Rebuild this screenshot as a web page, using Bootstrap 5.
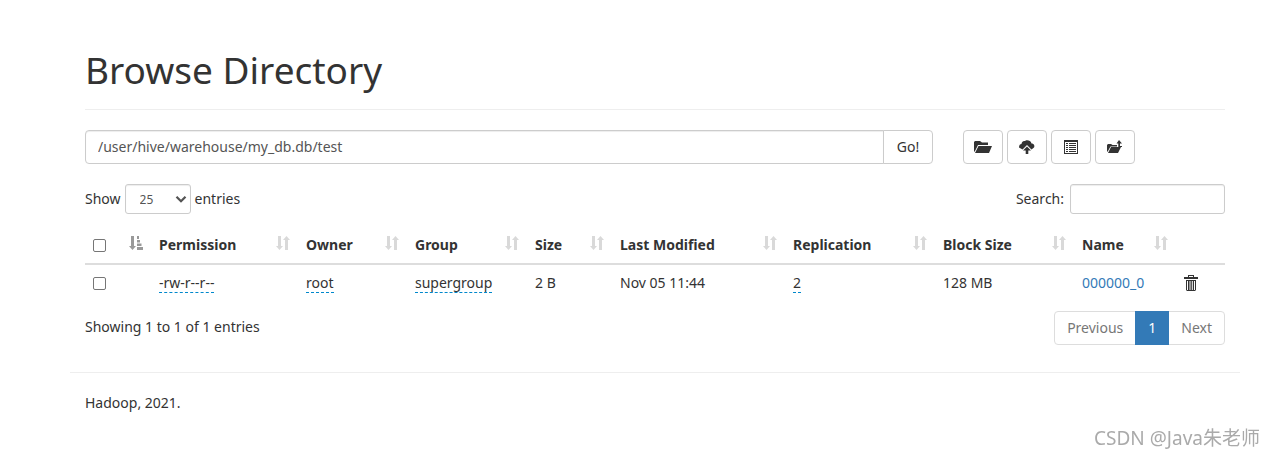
<!DOCTYPE html>
<html lang="en">
<head>
<meta charset="utf-8">
<meta name="viewport" content="width=device-width, initial-scale=1">
<title>Browsing HDFS</title>
<link href="https://cdn.jsdelivr.net/npm/bootstrap@5.3.0/dist/css/bootstrap.min.css" rel="stylesheet">
<style>
  body { font-family: "Noto Sans", "Noto Sans CJK SC", sans-serif; font-size: 14px; line-height: 22px; color: #333; }
  .page { max-width: 1170px; margin: 0 34px 0 70px; }
  .page-inner { padding: 0 15px; }
  .page-title { font-size: 37px; line-height: 44px; font-weight: 400; border-bottom: 1px solid #eee; padding: 48px 0 17px; margin-bottom: 20px; }
  .path-group { width: 848px; max-width: 100%; height: 34px; }
  .form-control, .form-select { border-color: #ccc; color: #555; font-size: 14px; line-height: 20px; box-shadow: inset 0 1px 1px rgba(0,0,0,.075); }
  .path-group .form-control { padding: 6px 12px; border-radius: 4px; }
  .btn-plain { border: 1px solid #ccc; color: #333; background: #fff; font-size: 14px; line-height: 20px; padding: 5px 12px; border-radius: 4px; }
  .btn-plain:hover { background: #e6e6e6; border-color: #adadad; }
  .go { width: 50px; }
  .tools { margin-left: 30px; }
  .tool { width: 40px; height: 34px; }
  .controls { margin-top: 20px; }
  .search { gap: 6px; }
  .len-select { width: 66px; height: 30px; font-size: 12px; padding: 5px 14px; border-radius: 3px; background-size: 12px 12px; background-position: right 3px center; background-image: url("data:image/svg+xml,%3csvg xmlns='http://www.w3.org/2000/svg' viewBox='0 0 16 16'%3e%3cpath fill='none' stroke='%23555' stroke-width='3' d='m2 5 6 6 6-6'/%3e%3c/svg%3e"); }
  .filter-box { width: 155px; height: 30px; padding: 5px 10px; border-radius: 3px; }
  .files { table-layout: fixed; margin: 11px 0 9px; color: #333; }
  .files th, .files td { padding: 7px 8px 8px; border: 0; white-space: nowrap; line-height: 22px; vertical-align: middle; }
  .files thead th { border-bottom: 2px solid #ddd; padding: 9px 8px 7px; }
  .files .form-check-input { width: 13px; height: 13px; margin: 0; border: 1px solid #767676; border-radius: 2px; display: block; }
  .sort { width: 14px; height: 16px; color: #d9d9d9; margin-top: 1px; }
  .sort.on { color: #999; margin-bottom: 5px; }
  .files .editable { color: #333; text-decoration: none; border-bottom: 1px dashed #0088cc; }
  .file-link { color: #337ab7; text-decoration: none; }
  .bare { border: 0; background: none; padding: 0; color: #333; display: flex; }
  .info { padding-top: 5px; }
  .pagination { --bs-pagination-font-size: 14px; --bs-pagination-padding-x: 12px; --bs-pagination-padding-y: 6px; --bs-pagination-color: #777; --bs-pagination-disabled-color: #777; --bs-pagination-border-color: #ddd; --bs-pagination-disabled-border-color: #ddd; --bs-pagination-disabled-bg: #fff; --bs-pagination-active-bg: #337ab7; --bs-pagination-active-border-color: #337ab7; --bs-pagination-border-radius: 4px; line-height: 20px; }
  .footer { border-top: 1px solid #eee; margin-top: 27px; padding: 19px 15px 0; }
  .watermark { position: fixed; right: 14px; bottom: 8px; font-size: 19px; line-height: 24px; color: #aaa; }
  svg { fill: currentColor; }
</style>
</head>
<body>
<svg class="d-none" xmlns="http://www.w3.org/2000/svg">
  <symbol id="i-sort" viewBox="0 0 14 16"><path d="M2 1h3v10h2L3.500 15 0 11h2zM9 15h3V5h2L10.500 1 7 5h2z"/></symbol>
  <symbol id="i-sorted" viewBox="0 0 14 16"><path d="M2 1h3v10h2L3.500 15 0 11h2zM8 1h2v3H8zM8 5h3v2.500H8zM8 8.500h4.500V11H8zM8 12h6v3H8z"/></symbol>
  <symbol id="i-folder" viewBox="0 0 18 14"><path d="M0 12V2l1-1h5l2 1.500h6V5H4L1 11zM4.500 6H18l-3 7H1z"/></symbol>
  <symbol id="i-upload" viewBox="0 0 16 16"><path d="M3.500 10.500 0 8.500C0 6 1.200 5 2.500 5 2.500 3 4 1.500 6 2c1-1.500 6-1 6.500 2.500C15 4.500 16 7 15 8.500l-2.500 2L8 6zM8 7.500l4 4H9.300V15H6.700v-3.500H4z"/></symbol>
  <symbol id="i-list" viewBox="0 0 14 14"><path fill-rule="evenodd" d="M0 0h14v14H0zM1 2v11h12V2z"/><path d="M2 3h2v1H2zm3 0h7v1H5zM2 5h2v1H2zm3 0h7v1H5zM2 7h2v1H2zm3 0h7v1H5zM2 9h2v1H2zm3 0h7v1H5zM2 11h2v1H2zm3 0h7v1H5z"/></symbol>
  <symbol id="i-parent" viewBox="0 0 16 14"><path d="M0 12V5l1-1h3l1.500 1H10v1.500H3.500L1 11zM4 7h10l-3 6H1zM11.300 7V3.500H9.500L12 0l3 3.500h-2V6H15v1z"/></symbol>
  <symbol id="i-trash" viewBox="0 0 14 16"><path fill-rule="evenodd" d="M4 2V0h6v2h4v2H0V2zM5 1v1h4V1zM2 5h10v10l-1 1H3l-1-1zM3 6v9h1V6zM5.500 6v9h1V6zM7.800 6v9h1V6zM10 6v9h1V6z"/></symbol>
</svg>

<main class="page">
  <div class="page-inner">
    <h1 class="page-title">Browse Directory</h1>
    <div class="d-flex flex-wrap">
      <form class="input-group path-group">
        <input class="form-control" type="text" value="/user/hive/warehouse/my_db.db/test" aria-label="Directory">
        <button class="btn btn-plain go" type="button">Go!</button>
      </form>
      <div class="d-flex gap-1 tools">
        <button class="btn-plain tool d-flex align-items-center justify-content-center p-0" type="button" aria-label="Create directory"><svg width="18" height="14"><use href="#i-folder"/></svg></button>
        <button class="btn-plain tool d-flex align-items-center justify-content-center p-0" type="button" aria-label="Upload files"><svg width="16" height="16"><use href="#i-upload"/></svg></button>
        <button class="btn-plain tool d-flex align-items-center justify-content-center p-0" type="button" aria-label="Cut and paste"><svg width="14" height="14"><use href="#i-list"/></svg></button>
        <button class="btn-plain tool d-flex align-items-center justify-content-center p-0" type="button" aria-label="Parent directory"><svg width="16" height="14"><use href="#i-parent"/></svg></button>
      </div>
    </div>

    <div class="d-flex justify-content-between controls">
      <label class="d-flex align-items-center gap-1">Show
        <select class="form-select len-select"><option>25</option><option>50</option><option>100</option></select>
        entries</label>
      <label class="d-flex align-items-center search">Search:<input class="form-control filter-box" type="search"></label>
    </div>

    <table class="table files">
      <colgroup><col style="width:30px"><col style="width:36px"><col style="width:147px"><col style="width:109px"><col style="width:120px"><col style="width:85px"><col style="width:173px"><col style="width:150px"><col style="width:139px"><col style="width:102px"><col style="width:49px"></colgroup>
      <thead>
        <tr>
          <th><input class="form-check-input" type="checkbox" aria-label="Select all"></th>
          <th><div class="d-flex justify-content-end"><svg class="sort on"><use href="#i-sorted"/></svg></div></th>
          <th><div class="d-flex justify-content-between">Permission<svg class="sort"><use href="#i-sort"/></svg></div></th>
          <th><div class="d-flex justify-content-between">Owner<svg class="sort"><use href="#i-sort"/></svg></div></th>
          <th><div class="d-flex justify-content-between">Group<svg class="sort"><use href="#i-sort"/></svg></div></th>
          <th><div class="d-flex justify-content-between">Size<svg class="sort"><use href="#i-sort"/></svg></div></th>
          <th><div class="d-flex justify-content-between">Last Modified<svg class="sort"><use href="#i-sort"/></svg></div></th>
          <th><div class="d-flex justify-content-between">Replication<svg class="sort"><use href="#i-sort"/></svg></div></th>
          <th><div class="d-flex justify-content-between">Block Size<svg class="sort"><use href="#i-sort"/></svg></div></th>
          <th><div class="d-flex justify-content-between">Name<svg class="sort"><use href="#i-sort"/></svg></div></th>
          <th></th>
        </tr>
      </thead>
      <tbody>
        <tr>
          <td><input class="form-check-input" type="checkbox" aria-label="Select 000000_0"></td>
          <td></td>
          <td><a class="editable" href="#">-rw-r--r--</a></td>
          <td><a class="editable" href="#">root</a></td>
          <td><a class="editable" href="#">supergroup</a></td>
          <td>2 B</td>
          <td>Nov 05 11:44</td>
          <td><a class="editable" href="#">2</a></td>
          <td>128 MB</td>
          <td><a class="file-link" href="#">000000_0</a></td>
          <td><button class="bare" type="button" aria-label="Delete"><svg width="14" height="16"><use href="#i-trash"/></svg></button></td>
        </tr>
      </tbody>
    </table>

    <div class="d-flex justify-content-between">
      <div class="info">Showing 1 to 1 of 1 entries</div>
      <ul class="pagination mb-0">
        <li class="page-item disabled"><a class="page-link" href="#">Previous</a></li>
        <li class="page-item active"><a class="page-link" href="#">1</a></li>
        <li class="page-item disabled"><a class="page-link" href="#">Next</a></li>
      </ul>
    </div>
  </div>
  <footer class="footer">Hadoop, 2021.</footer>
</main>
<div class="watermark">CSDN @Java朱老师</div>
<script src="https://cdn.jsdelivr.net/npm/bootstrap@5.3.0/dist/js/bootstrap.bundle.min.js"></script>
</body>
</html>
